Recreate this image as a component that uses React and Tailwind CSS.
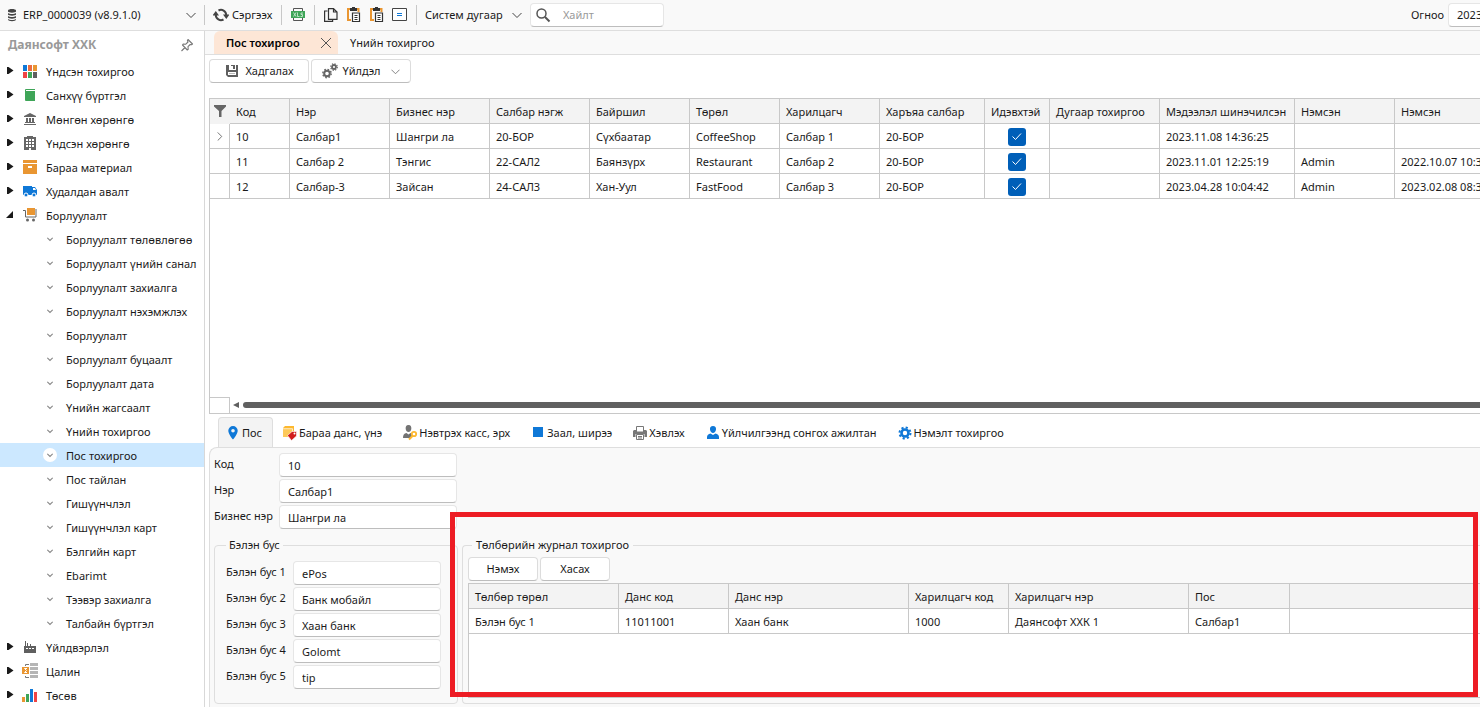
import { useState } from 'react'

const modules = [
  { name: 'Үндсэн тохиргоо', icon: 'blocks' },
  { name: 'Санхүү бүртгэл', icon: 'book' },
  { name: 'Мөнгөн хөрөнгө', icon: 'bank' },
  { name: 'Үндсэн хөрөнгө', icon: 'building' },
  { name: 'Бараа материал', icon: 'box' },
  { name: 'Худалдан авалт', icon: 'truck' },
  {
    name: 'Борлуулалт',
    icon: 'cart',
    children: [
      'Борлуулалт төлөвлөгөө',
      'Борлуулалт үнийн санал',
      'Борлуулалт захиалга',
      'Борлуулалт нэхэмжлэх',
      'Борлуулалт',
      'Борлуулалт буцаалт',
      'Борлуулалт дата',
      'Үнийн жагсаалт',
      'Үнийн тохиргоо',
      'Пос тохиргоо',
      'Пос тайлан',
      'Гишүүнчлэл',
      'Гишүүнчлэл карт',
      'Бэлгийн карт',
      'Ebarimt',
      'Тээвэр захиалга',
      'Талбайн бүртгэл'
    ]
  },
  { name: 'Үйлдвэрлэл', icon: 'factory' },
  { name: 'Цалин', icon: 'salary' },
  { name: 'Төсөв', icon: 'chart' }
]

const branchColumns = [
  { title: 'Код', width: 'w-[60px]' },
  { title: 'Нэр', width: 'w-[100px]' },
  { title: 'Бизнес нэр', width: 'w-[100px]' },
  { title: 'Салбар нэгж', width: 'w-[100px]' },
  { title: 'Байршил', width: 'w-[100px]' },
  { title: 'Төрөл', width: 'w-[90px]' },
  { title: 'Харилцагч', width: 'w-[100px]' },
  { title: 'Харъяа салбар', width: 'w-[105px]' },
  { title: 'Идэвхтэй', width: 'w-[65px]' },
  { title: 'Дугаар тохиргоо', width: 'w-[110px]' },
  { title: 'Мэдээлэл шинэчилсэн', width: 'w-[135px]' },
  { title: 'Нэмсэн', width: 'w-[100px]' },
  { title: 'Нэмсэн', width: '' }
]

const branches = [
  ['10', 'Салбар1', 'Шангри ла', '20-БОР', 'Сүхбаатар', 'CoffeeShop', 'Салбар 1', '20-БОР', true, '', '2023.11.08 14:36:25', '', ''],
  ['11', 'Салбар 2', 'Тэнгис', '22-САЛ2', 'Баянзүрх', 'Restaurant', 'Салбар 2', '20-БОР', true, '', '2023.11.01 12:25:19', 'Admin', '2022.10.07 10:3'],
  ['12', 'Салбар-3', 'Зайсан', '24-САЛ3', 'Хан-Уул', 'FastFood', 'Салбар 3', '20-БОР', true, '', '2023.04.28 10:04:42', 'Admin', '2023.02.08 08:3']
]

const detailTabs = [
  { name: 'Пос', icon: 'pin' },
  { name: 'Бараа данс, үнэ', icon: 'price' },
  { name: 'Нэвтрэх касс, эрх', icon: 'userKey' },
  { name: 'Заал, ширээ', icon: 'square' },
  { name: 'Хэвлэх', icon: 'printer' },
  { name: 'Үйлчилгээнд сонгох ажилтан', icon: 'user' },
  { name: 'Нэмэлт тохиргоо', icon: 'gear' }
]

const posFields = [
  { id: 'code', label: 'Код', value: '10' },
  { id: 'name', label: 'Нэр', value: 'Салбар1' },
  { id: 'business', label: 'Бизнес нэр', value: 'Шангри ла' }
]

const nonCash = ['ePos', 'Банк мобайл', 'Хаан банк', 'Golomt', 'tip']

const journalColumns = [
  { title: 'Төлбөр төрөл', width: 'w-[150px]' },
  { title: 'Данс код', width: 'w-[110px]' },
  { title: 'Данс нэр', width: 'w-[180px]' },
  { title: 'Харилцагч код', width: 'w-[100px]' },
  { title: 'Харилцагч нэр', width: 'w-[180px]' },
  { title: 'Пос', width: 'w-[101px]' },
  { title: '', width: '' }
]

const journalRows = [['Бэлэн бус 1', '11011001', 'Хаан банк', '1000', 'Даянсофт ХХК 1', 'Салбар1', '']]

const icons = {
  blocks: (
    <>
      <path fill="#0f78d7" d="M1 2h4v6H1z" />
      <path fill="#ec6b3d" d="M6 2h4v6H6z" />
      <path fill="#e99632" d="M11 2h4v6h-4z" />
      <path fill="#ef4444" d="M1 9h4v6H1z" />
      <path fill="#3fa558" d="M6 9h4v6H6z" />
      <path fill="#5f5f5f" d="M11 9h4v6h-4z" />
    </>
  ),
  book: (
    <path fill="#3fa558" d="M4 2h9v1H4v1h9v10H4a1 1 0 0 1-1-1V3a1 1 0 0 1 1-1z" />
  ),
  bank: (
    <path fill="#666" d="M8 2l6 3v1H2V5zM4 7h2v4H4zM7 7h2v4H7zM10 7h2v4h-2zM3 11h10v1H3zM2 13h12v1H2z" />
  ),
  building: (
    <>
      <path fill="#666" d="M5 1h6v1h3v13H9v-2H7v2H2V2h3z" />
      <path fill="#fff" d="M4 4h2v2H4zM7 4h2v2H7zM10 4h2v2h-2zM4 7h2v2H4zM7 7h2v2H7zM10 7h2v2h-2zM4 10h2v2H4zM7 10h2v2H7zM10 10h2v2h-2z" />
    </>
  ),
  box: (
    <>
      <path fill="#e99632" d="M1 1h14v3H1zM1 5h14v10H1z" />
      <path fill="#fff" d="M6 7h4v2H6z" />
    </>
  ),
  truck: (
    <>
      <path fill="#0f78d7" d="M1 3h9v1h3l2 3v5H1z" />
      <path fill="#fff" d="M11 5h2l1 2h-3z" />
      <circle cx="4" cy="12" r="2" fill="#0f78d7" stroke="#fff" />
      <circle cx="12" cy="12" r="2" fill="#0f78d7" stroke="#fff" />
    </>
  ),
  cart: (
    <>
      <path fill="#e99632" d="M5 1h8v7H5z" />
      <path fill="none" stroke="#666" d="M1 3.500h2.500v6.500h10.500v-8" />
      <circle cx="5.500" cy="13" r="1.500" fill="#666" />
      <circle cx="11.500" cy="13" r="1.500" fill="#666" />
    </>
  ),
  factory: (
    <>
      <path fill="#5f5f5f" d="M2 14V7h1V2h1v5h1V4h1v3h2V5h1v2h5v7z" />
      <path fill="#fff" d="M4 9h2v1H4zM7 9h2v1H7zM10 9h2v1h-2z" />
    </>
  ),
  salary: (
    <>
      <path fill="none" stroke="#777" d="M3.500 3V1.500H7M3.500 13v1.500H7" />
      <path fill="#b5b5b5" d="M8 0h8v3H8zM8 4h8v3H8zM8 8h8v3H8zM8 12h8v3H8z" />
      <path fill="#e99632" d="M0 4h7v7H0z" />
      <path fill="none" stroke="#fff" d="M5 5.500H2.500l2 2-2 2H5" />
    </>
  ),
  chart: (
    <>
      <path fill="#e99632" d="M0 10h3v5H0z" />
      <path fill="#3fa558" d="M4 7h3v8H4z" />
      <path fill="#0f78d7" d="M8 2h3v13H8z" />
      <path fill="#ef4444" d="M12 5h3v10h-3z" />
    </>
  ),
  database: (
    <path fill="#444" d="M4 3.500C4 1.500 12 1.500 12 3.500v1C12 6 4 6 4 4.500zM4 6c2 1.300 6 1.300 8 0v1.500C12 9 4 9 4 7.500zM4 9c2 1.300 6 1.300 8 0v1.500c0 1.500-8 1.500-8 0zM4 12c2 1.300 6 1.300 8 0v.8c0 1.800-8 1.800-8 0z" />
  ),
  refresh: (
    <>
      <path fill="none" stroke="#444" strokeWidth="2" d="M5.500 3.500A5.200 5.200 0 0 1 13.200 8M10.500 12.500A5.200 5.200 0 0 1 2.800 8" />
      <path fill="#444" d="M10 7.500h6.500l-3.200 4.500zM-.5 8.500h6.500L2.800 4z" />
    </>
  ),
  xls: (
    <>
      <path fill="none" stroke="#555" d="M3.500 5V1.500h9V5M3.500 11v2.500h9V11" />
      <path fill="#3fa558" d="M1 4h14v7H1z" />
      <path fill="none" stroke="#d6f0dc" strokeWidth=".8" d="M3.500 5.500l2.500 4M6 5.500l-2.500 4M7.500 5.500v4h2M13 6h-2v1.500h1.500v2h-2" />
    </>
  ),
  copy: (
    <path fill="none" stroke="#333" strokeWidth="1.200" d="M4.500 4H1.600v10.400h8V12.500M5.500 1.600h5l3.500 3.500v7.300H5.500zM10.500 1.600V5H14" />
  ),
  paste: (
    <>
      <path fill="none" stroke="#e99632" strokeWidth="2" d="M4 2H2v11h3M11 2h1.500v3" />
      <path fill="#333" d="M4 1h2V0h3v1h2v3H4z" />
      <path fill="#fff" stroke="#333" strokeWidth="1.200" d="M6.500 6h7v8.500h-7z" />
      <path stroke="#333" d="M8.500 8.500h3M8.500 10.500h3M8.500 12.500h3" />
    </>
  ),
  equal: (
    <>
      <path fill="#fff" stroke="#444" d="M.5 1.500h14v12H.5z" />
      <path stroke="#0f78d7" d="M5 6.500h5M5 8.500h5" />
    </>
  ),
  search: (
    <>
      <circle cx="6.500" cy="6.500" r="4.500" fill="none" stroke="#555" strokeWidth="1.500" />
      <path stroke="#555" strokeWidth="2" d="M10 10l4.500 4.500" />
    </>
  ),
  save: (
    <>
      <path fill="#5f5f5f" d="M2 2h3v5h7V2h2v12H4l-2-2z" />
      <path fill="#5f5f5f" d="M7 2h4v4H9V3H7z" />
      <path fill="#fff" d="M4 9h8v3H4z" />
      <path fill="#bbb" d="M5 10h6v1H5z" />
    </>
  ),
  gears: (
    <>
      <circle cx="5" cy="10.500" r="2.800" fill="none" stroke="#666" strokeWidth="2" />
      <circle cx="5" cy="10.500" r="4.200" fill="none" stroke="#666" strokeWidth="1.400" strokeDasharray="1.650 1.650" />
      <circle cx="12" cy="4" r="2" fill="none" stroke="#666" strokeWidth="1.800" />
      <circle cx="12" cy="4" r="3.300" fill="none" stroke="#666" strokeWidth="1.200" strokeDasharray="1.300 1.300" />
    </>
  ),
  pushpin: (
    <path fill="none" stroke="#777" strokeWidth="1.100" strokeLinejoin="round" d="M9 2.500l4.500 4.500-1 .7-1.300-.2-2.200 2.200.2 2.600-.9.700L3.500 8l.7-1 2.600.2L9 5l-.6-1.500zM6 10.500L2.500 14" />
  ),
  filter: <path fill="#666" d="M2 2h12v1.500L9.500 8v6h-2.500V8L2 3.500z" />,
  pin: (
    <path fill="#0f78d7" fillRule="evenodd" d="M8 1a4.700 4.700 0 0 1 4.700 4.700C12.700 9 8 14.500 8 14.500S3.300 9 3.300 5.700A4.700 4.700 0 0 1 8 1zm0 3a1.800 1.800 0 1 0 0 3.600A1.800 1.800 0 0 0 8 4z" />
  ),
  price: (
    <>
      <path fill="#fdb82f" d="M1 3l2-2h9v9l-2 2H1z" />
      <path fill="#fdc95a" d="M1 4h9v8H1z" />
      <path stroke="#fff" strokeWidth=".7" fill="none" d="M1 3.700h9.500V11" />
      <path fill="#d11c1c" stroke="#fff" strokeWidth=".6" d="M5.500 10.500L10 6.500l4.500 0v4.500L9.500 15.500z" />
      <circle cx="12.500" cy="8.500" r="1" fill="#fff" />
    </>
  ),
  userKey: (
    <>
      <path fill="#737373" d="M6.500 0C9 0 9.500 2 9.300 4 9 6 8 7 6.500 7S4 6 3.700 4C3.500 2 4 0 6.500 0zM1 13c0-3 1-4.500 3.500-5l2 1.500L8.500 8l1.500.7V12l-1 1z" />
      <circle cx="12" cy="9" r="2.200" fill="none" stroke="#fdb82f" strokeWidth="1.800" />
      <path stroke="#fdb82f" strokeWidth="2" d="M10.500 11L7 14.500" />
    </>
  ),
  square: <path fill="#0f78d7" d="M3 2h10v10H3z" />,
  printer: (
    <>
      <path fill="#fff" stroke="#777" d="M4.500 1.500h7V7h-7z" />
      <path fill="#777" d="M2 5h2v2h8V5h2l1 1v6h-2.500V9h-9v3H1V6z" />
      <path fill="#fff" stroke="#777" d="M4.500 9.500h7v5h-7zM6 11.500h4M6 13h4" />
    </>
  ),
  user: (
    <path fill="#0f78d7" d="M8 1c2.300 0 3.200 1.500 3 3.500C10.700 6.700 9.500 8 8 8S5.300 6.700 5 4.500C4.800 2.500 5.700 1 8 1zM2 14v-2c0-2 1.500-3 3.500-3.500L8 10l2.500-1.500C12.500 9 14 10 14 12v2z" />
  ),
  gear: (
    <>
      <circle cx="8" cy="8" r="3.500" fill="none" stroke="#0f78d7" strokeWidth="2.600" />
      <circle cx="8" cy="8" r="5.500" fill="none" stroke="#0f78d7" strokeWidth="2" strokeDasharray="2.160 2.160" />
    </>
  )
}

function Icon({ name, className = 'w-4 h-4' }) {
  return (
    <svg viewBox="0 0 16 16" className={`shrink-0 ${className}`} aria-hidden="true">
      {icons[name]}
    </svg>
  )
}

function Chevron({ className = 'w-[10px] h-[10px] text-[#444]' }) {
  return (
    <svg viewBox="0 0 10 10" className={`shrink-0 ${className}`} fill="none" stroke="currentColor" aria-hidden="true">
      <path d="M.5 3L5 7.500 9.500 3" />
    </svg>
  )
}

function Separator() {
  return <span className="w-px h-5 bg-[#c8c8c8] shrink-0"></span>
}

const fieldStyle = 'h-6 min-w-0 rounded border border-[#e6e6e6] border-b-[#bdbdbd] bg-white px-2 outline-none'
const buttonStyle = 'flex items-center justify-center h-6 rounded border border-[#dcdcdc] border-b-[#bdbdbd] bg-white'

function TopBar() {
  return (
    <header className="flex items-center h-[31px] pb-px shrink-0 bg-[#f9f9f9] border-b border-[#dedede]">
      <button className="flex items-center w-[204px] pl-1 pr-2 shrink-0">
        <Icon name="database" />
        <span className="ml-[3px] mr-auto">ERP_0000039 (v8.9.1.0)</span>
        <Chevron />
      </button>
      <Separator />
      <button className="flex items-center gap-[3px] w-[76px] pl-2 shrink-0">
        <Icon name="refresh" />
        Сэргээх
      </button>
      <Separator />
      <button className="flex justify-center w-8 shrink-0" aria-label="XLS"><Icon name="xls" /></button>
      <Separator />
      <div className="flex items-center gap-[7px] w-[101px] pl-2 shrink-0">
        <button aria-label="Copy"><Icon name="copy" /></button>
        <button aria-label="Paste"><Icon name="paste" /></button>
        <button aria-label="Paste special"><Icon name="paste" /></button>
        <button aria-label="Equal"><Icon name="equal" /></button>
      </div>
      <Separator />
      <button className="flex items-center justify-between w-[97px] mx-2 shrink-0 whitespace-nowrap">
        Систем дугаар
        <Chevron />
      </button>
      <label className={`flex items-center w-[134px] ${fieldStyle}`}>
        <Icon name="search" className="w-4 h-4 -ml-1" />
        <input className="ml-3 w-20 outline-none placeholder:text-[#999]" placeholder="Хайлт" aria-label="Хайлт" />
      </label>
      <label htmlFor="date" className="ml-auto mr-1">Огноо</label>
      <input id="date" className="h-6 w-8 shrink-0 rounded-l border border-r-0 border-[#e6e6e6] border-b-[#bdbdbd] bg-white pl-2 outline-none" defaultValue="2023" />
    </header>
  )
}

function Sidebar() {
  const [selected, setSelected] = useState('Пос тохиргоо')

  return (
    <aside className="w-[205px] shrink-0 bg-white border-r border-[#d8d8d8] overflow-hidden">
      <div className="flex items-center justify-between h-7 pl-2 pr-[9px]">
        <h1 className="text-[12px] font-bold text-[#999]">Даянсофт ХХК</h1>
        <button aria-label="Pin"><Icon name="pushpin" /></button>
      </div>
      <ul>
        {modules.map((module) => (
          <li key={module.name}>
            <button className="flex items-center w-full h-6">
              <svg viewBox="0 0 8 8" className="ml-1.5 w-2 h-2 fill-[#1a1a1a]">
                <path d={module.children ? 'M7 0v7H0z' : 'M1 0h1.500L7.500 3.500 2.500 7H1z'} />
              </svg>
              <Icon name={module.icon} className="ml-2 w-4 h-4" />
              <span className="ml-2 pt-px">{module.name}</span>
            </button>
            {module.children && (
              <ul>
                {module.children.map((child) => (
                  <li key={child}>
                    <button
                      onClick={() => setSelected(child)}
                      className={`flex items-center w-full h-6 pl-[43px] whitespace-nowrap ${selected === child ? 'bg-[#cce8ff]' : ''}`}
                    >
                      <span className="flex items-center justify-center w-3.5 h-3.5 rounded-full bg-white">
                        <Chevron className="w-1.5 h-1.5 text-[#888] stroke-2" />
                      </span>
                      <span className="ml-[9px] pt-px">{child}</span>
                    </button>
                  </li>
                ))}
              </ul>
            )}
          </li>
        ))}
      </ul>
    </aside>
  )
}

function BranchGrid() {
  return (
    <section className="ml-1 mt-[15px] flex flex-col flex-1 min-h-0 border border-r-0 border-[#c8c8c8] bg-white overflow-hidden">
      <table className="w-full table-fixed border-separate border-spacing-0 text-left whitespace-nowrap">
        <thead>
          <tr className="h-[25px] bg-[#f3f3f3]">
            <th className="w-5 p-0 border-b border-[#f3f3f3]">
              <Icon name="filter" className="mx-auto w-4 h-4" />
            </th>
            {branchColumns.map((column, i) => (
              <th key={i} className={`p-0 pl-1.5 pt-px font-normal border-r border-b border-[#c8c8c8] last:border-r-0 ${column.width}`}>
                {column.title}
              </th>
            ))}
          </tr>
        </thead>
        <tbody>
          {branches.map((row, r) => (
            <tr key={row[0]} className="h-[25px]">
              <td className="p-0 border-r border-b border-[#c8c8c8]">
                {r === 0 && <Chevron className="mx-auto w-[9px] h-[9px] -rotate-90 text-[#666]" />}
              </td>
              {row.map((cell, i) => (
                <td key={i} className="p-0 pl-1.5 pt-px border-r border-b border-[#c8c8c8] last:border-r-0">
                  {cell === true ? (
                    <span className="relative block mx-auto w-[18px] h-[18px] -translate-x-[3px]">
                      <input type="checkbox" defaultChecked aria-label={`Идэвхтэй ${row[0]}`} className="block appearance-none w-[18px] h-[18px] rounded-[3px] bg-[#005fb8]" />
                      <svg viewBox="0 0 18 18" className="absolute inset-0 pointer-events-none" fill="none" stroke="#fff">
                        <path d="M4.500 8.500l3 3 5.500-6" />
                      </svg>
                    </span>
                  ) : cell}
                </td>
              ))}
            </tr>
          ))}
        </tbody>
      </table>
      {/* Horizontal scroll */}
      <div className="mt-auto flex items-center h-4 shrink-0">
        <span className="w-5 h-full border-t border-r border-[#c8c8c8]"></span>
        <svg viewBox="0 0 6 6" className="ml-[3px] mr-1 w-1.5 h-1.5 fill-[#606060]">
          <path d="M6 0v6L0 3z" />
        </svg>
        <span className="flex-1 h-1.5 rounded-l-full bg-[#606060]"></span>
      </div>
    </section>
  )
}

function DetailTabs() {
  const [active, setActive] = useState('Пос')

  return (
    <nav className="flex h-[30px] mt-[3px] pl-[13px] shrink-0 whitespace-nowrap" role="tablist">
      {detailTabs.map((tab) => (
        <button
          key={tab.name}
          role="tab"
          aria-selected={active === tab.name}
          onClick={() => setActive(tab.name)}
          className={`flex items-center gap-px rounded-t border border-b-0 ${active === tab.name ? 'px-1.5 min-w-[55px] bg-[#f3f3f3] border-[#dedede]' : 'pl-2 pr-2.5 border-transparent'}`}
        >
          <Icon name={tab.icon} />
          {tab.name}
        </button>
      ))}
    </nav>
  )
}

function PosDetail() {
  return (
    <section className="relative ml-1 h-[260px] shrink-0 pl-1 pt-[5px] rounded-tl-lg border-t border-l border-[#dedede] bg-[#f9f9f9]">
      <div className="flex flex-col gap-0.5">
        {posFields.map((field) => (
          <div key={field.id} className="flex">
            <label htmlFor={field.id} className="w-[65px] whitespace-nowrap leading-[22px]">{field.label}</label>
            <input id={field.id} defaultValue={field.value} className={`w-[178px] ${fieldStyle}`} />
          </div>
        ))}
      </div>
      <div className="flex gap-1 mt-2">
        <fieldset className="w-[244px] shrink-0 rounded border border-[#dedede] pl-[11px] pb-[13px]">
          <legend className="px-[3px] leading-4">Бэлэн бус</legend>
          <div className="flex flex-col gap-0.5 mt-2">
            {nonCash.map((value, i) => (
              <div key={i} className="flex">
                <label htmlFor={`cash-${i}`} className="w-[67px] whitespace-nowrap leading-[22px]">Бэлэн бус {i + 1}</label>
                <input id={`cash-${i}`} defaultValue={value} className={`w-[148px] ${fieldStyle}`} />
              </div>
            ))}
          </div>
        </fieldset>
        <fieldset className="flex flex-col flex-1 min-w-0 rounded-l border border-r-0 border-[#dedede] pl-[5px] pb-[5px]">
          <legend className="ml-1 px-1 leading-4">Төлбөрийн журнал тохиргоо</legend>
          <div className="flex gap-0.5 mt-1">
            <button className={`w-[70px] ${buttonStyle}`}>Нэмэх</button>
            <button className={`w-[70px] ${buttonStyle}`}>Хасах</button>
          </div>
          <div className="mt-0.5 h-[115px] border border-r-0 border-[#c8c8c8] bg-white overflow-hidden">
            <table className="w-full table-fixed border-separate border-spacing-0 text-left whitespace-nowrap">
              <thead>
                <tr className="h-[25px] bg-[#f3f3f3]">
                  {journalColumns.map((column, i) => (
                    <th key={i} className={`p-0 pl-1.5 pt-px font-normal border-r border-b border-[#c8c8c8] last:border-r-0 ${column.width}`}>
                      {column.title}
                    </th>
                  ))}
                </tr>
              </thead>
              <tbody>
                {journalRows.map((row, r) => (
                  <tr key={r} className="h-[25px]">
                    {row.map((cell, i) => (
                      <td key={i} className="p-0 pl-1.5 pt-px border-r border-b border-[#c8c8c8] last:border-r-0">{cell}</td>
                    ))}
                  </tr>
                ))}
              </tbody>
            </table>
          </div>
        </fieldset>
      </div>
      {/* Highlight over the payment journal */}
      <div className="absolute left-[240px] right-0.5 top-16 h-[185px] border-[5px] border-[#ed1c24] pointer-events-none"></div>
    </section>
  )
}

export default function App() {
  return (
    <div className="flex flex-col h-screen overflow-hidden bg-white font-['Noto_Sans','Open_Sans',sans-serif] text-[11px] leading-4 text-[#1a1a1a]">
      <TopBar />
      <div className="flex flex-1 min-h-0">
        <Sidebar />
        <main className="flex flex-col flex-1 min-w-0">
          <div className="flex h-6 pl-[9px] shrink-0 bg-[#f9f9f9] border-b border-[#dedede]">
            <div className="flex items-center justify-between w-[124px] pl-3 pr-[7px] rounded-t-md bg-[#fde6d6]">
              <button className="pt-px font-semibold text-black whitespace-nowrap">Пос тохиргоо</button>
              <button aria-label="Close">
                <svg viewBox="0 0 10 10" className="w-[10px] h-[10px]" fill="none" stroke="#555">
                  <path d="M0 0l10 10M10 0L0 10" />
                </svg>
              </button>
            </div>
            <button className="ml-3 pt-px">Үнийн тохиргоо</button>
          </div>
          <div className="flex gap-0.5 pl-1 mt-1 shrink-0">
            <button className={`w-[100px] gap-[5px] ${buttonStyle}`}>
              <Icon name="save" />
              Хадгалах
            </button>
            <button className={`w-[100px] gap-1 ${buttonStyle}`}>
              <Icon name="gears" />
              Үйлдэл
              <Chevron className="ml-1.5 w-[9px] h-[9px] text-[#777]" />
            </button>
          </div>
          <BranchGrid />
          <DetailTabs />
          <PosDetail />
        </main>
      </div>
    </div>
  )
}
